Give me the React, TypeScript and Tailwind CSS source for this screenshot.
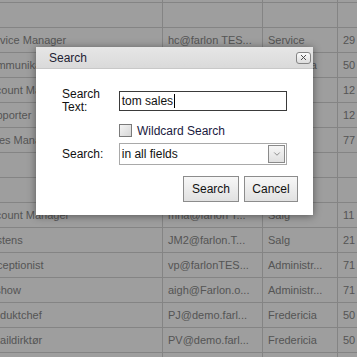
import { ChevronDown, X } from 'lucide-react';

const rows = [
  ['', '', '', ''],
  ['', '', '', ''],
  ['Service Manager', 'hc@farlon TES...', 'Service', '29'],
  ['Kommunikation', 'kk@farlon TES...', 'Fredericia', '50'],
  ['Account Manager', 'am@farlon TES...', 'Salg', '12'],
  ['Supporter', 'sp@farlon TES...', 'Support', '12'],
  ['Sales Manager', 'sm@farlon TES...', 'Salg', '77'],
  ['', '', '', ''],
  ['', '', '', ''],
  ['Account Manager', 'mna@farlon T...', 'Salg', '11'],
  ['Kristens', 'JM2@farlon.T...', 'Salg', '21'],
  ['Receptionist', 'vp@farlonTES...', 'Administr...', '71'],
  ['Tvshow', 'aigh@Farlon.o...', 'Administr...', '71'],
  ['Produktchef', 'PJ@demo.farl...', 'Fredericia', '50'],
  ['Detaildirktør', 'PV@demo.farl...', 'Fredericia', '50'],
  ['', '', '', ''],
];

function Grid() {
  return (
    <div className="-ml-[22px] -mt-[22px] flex flex-col">
      {rows.map((r, i) => (
        <div key={i} className="flex h-[25px] border-b border-[#d6d6d6] text-[11px] text-[#8a8a8a]">
          <div className="flex w-[185px] shrink-0 items-center whitespace-nowrap border-r border-[#d6d6d6] pl-[5px]">{r[0]}</div>
          <div className="flex w-[100px] shrink-0 items-center whitespace-nowrap border-r border-[#d6d6d6] pl-[5px]">{r[1]}</div>
          <div className="flex w-[75px] shrink-0 items-center whitespace-nowrap border-r border-[#d6d6d6] pl-[5px]">{r[2]}</div>
          <div className="flex w-[40px] shrink-0 items-center whitespace-nowrap pl-[5px]">{r[3]}</div>
        </div>
      ))}
    </div>
  );
}

export default function App() {
  return (
    <div className="relative h-[357px] w-[357px] overflow-hidden bg-white font-['Liberation_Sans',Arial,sans-serif]">
      <Grid />
      <div className="absolute inset-0 bg-black/[0.38]" />

      <div className="absolute left-[36px] top-[47px] flex h-[168px] w-[277px] flex-col bg-white shadow-[0_1px_8px_rgba(0,0,0,0.45)]">
        <div className="flex h-[22px] shrink-0 items-center justify-between border-b border-[#c8c8c8] bg-gradient-to-b from-[#e6e6e6] to-[#dadada] pl-[13px] pr-[2px]">
          <span className="text-[12px] text-[#1e2233]">Search</span>
          <button className="flex h-[12px] w-[15px] items-center justify-center rounded-[3px] border border-[#858585] bg-gradient-to-b from-[#fbfbfb] to-[#dcdcdc] text-[#444]">
            <X size={9} strokeWidth={2.5} />
          </button>
        </div>

        <div className="flex flex-col px-[26px] pt-[19px] text-[12px] text-[#111]">
          <div className="flex items-center">
            <div className="w-[57px] leading-[13px]">
              Search
              <br />
              Text:
            </div>
            <div className="flex h-[20px] w-[169px] items-center border border-[#3a3a3a] pl-[2px]">
              tom sales
              <span className="ml-[1px] h-[14px] w-px bg-black" />
            </div>
          </div>

          <div className="mt-[10px] flex h-[13px] items-center pl-[57px]">
            <span className="h-[13px] w-[13px] border border-[#7a7a7a] bg-gradient-to-br from-[#f4f4f4] to-[#d6d6d6]" />
            <span className="ml-[5px] text-[#1a1a40]">Wildcard Search</span>
          </div>

          <div className="mt-[6px] flex items-center">
            <div className="w-[57px]">Search:</div>
            <div className="relative flex h-[22px] w-[169px] items-center border border-[#a9a9a9] pl-[2px]">
              in all fields
              <span className="absolute bottom-[1px] right-[1px] top-[1px] flex w-[17px] items-center justify-center border border-[#8a8a8a] bg-gradient-to-b from-[#f6f6f6] to-[#e0e0e0] text-[#555]">
                <ChevronDown size={10} strokeWidth={1.5} />
              </span>
            </div>
          </div>
        </div>

        <div className="mt-[11px] flex justify-end gap-[5px] pr-[15px] text-[12px] text-[#111]">
          <button className="h-[26px] w-[56px] border border-[#8c8c8c] bg-gradient-to-b from-[#f7f7f7] to-[#e1e1e1]">Search</button>
          <button className="h-[26px] w-[54px] border border-[#8c8c8c] bg-gradient-to-b from-[#f7f7f7] to-[#e1e1e1]">Cancel</button>
        </div>
      </div>
    </div>
  );
}
